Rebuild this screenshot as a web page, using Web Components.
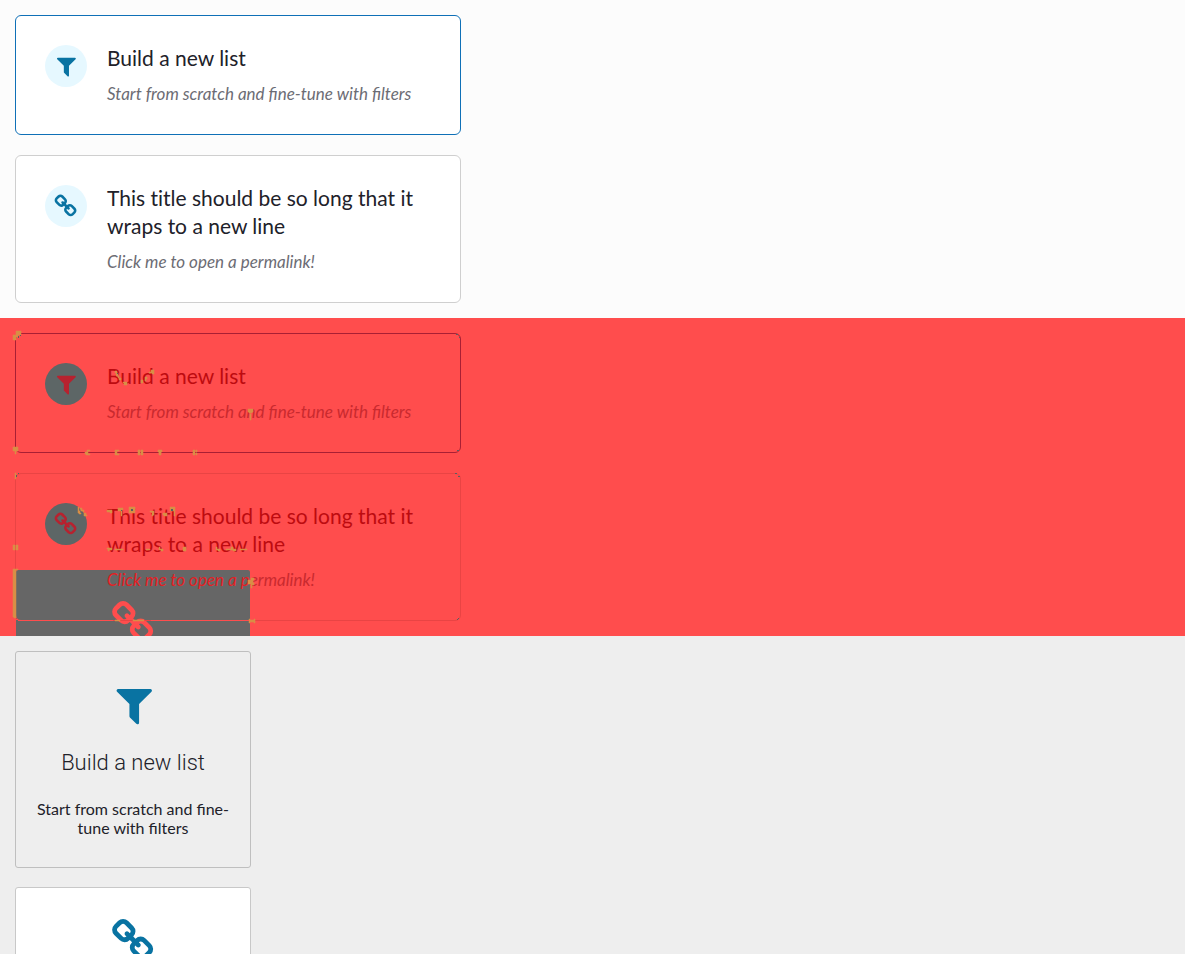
<!DOCTYPE html>
<html lang="en">
<head>
<meta charset="utf-8">
<title>Option cards</title>
<style>
body{margin:0;font-family:Lato,"Noto Sans",sans-serif;color:#212129}
</style>
</head>
<body>
<card-page></card-page>
<script>
const ICONS={
filter:['-30 -20 1792 1792','M1595 295q17 41-14 70l-493 493v742q0 42-39 59-13 5-25 5-27 0-45-19l-256-256q-19-19-19-45v-486l-493-493q-31-29-14-70 17-39 59-39h1280q42 0 59 39z'],
link:['-30 -20 1792 1792','M1456 1216q0-40-28-68l-208-208q-28-28-68-28-42 0-72 32 3 3 19 18.5t21.5 21.5 15 19 13 25.5 3.5 27.5q0 40-28 68t-68 28q-15 0-27.5-3.5t-25.5-13-19-15-21.5-21.5-18.5-19q-33 31-33 73 0 40 28 68l206 207q27 27 68 27 40 0 68-26l147-146q28-28 28-67zm-703-705q0-40-28-68l-206-207q-28-28-68-28-39 0-68 27l-147 146q-28 28-28 67 0 40 28 68l208 208q27 27 68 27 42 0 72-31-3-3-19-18.5t-21.5-21.5-15-19-13-25.5-3.5-27.5q0-40 28-68t68-28q15 0 27.5 3.5t25.5 13 19 15 21.5 21.5 18.5 19q33-31 33-73zm895 705q0 120-85 203l-147 146q-83 83-203 83-121 0-204-85l-206-207q-83-83-83-203 0-123 88-209l-88-88q-86 88-208 88-120 0-204-84l-208-208q-84-84-84-204t85-203l147-146q83-83 203-83 121 0 204 85l206 207q83 83 83 203 0 123-88 209l88 88q86-88 208-88 120 0 204 84l208 208q84 84 84 204z']
};
const define=(name,html)=>customElements.define(name,class extends HTMLElement{
  constructor(){super();this.attachShadow({mode:'open'}).innerHTML=html;}
});

customElements.define('app-icon',class extends HTMLElement{
  connectedCallback(){
    if(this.shadowRoot)return;
    const [box,path]=ICONS[this.getAttribute('name')];
    this.attachShadow({mode:'open'}).innerHTML=`<style>:host{display:block;width:24px;height:24px}svg{display:block;width:100%;height:100%;fill:currentColor}</style>
    <svg viewBox="${box}" aria-hidden="true"><path d="${path}"/></svg>`;
  }
});

customElements.define('option-card',class extends HTMLElement{
  connectedCallback(){
    if(this.shadowRoot)return;
    const icon=this.getAttribute('icon');
    const tag=icon==='link'?'a href="#permalink"':'button type="button"';
    this.attachShadow({mode:'open'}).innerHTML=`<style>
    :host{display:block;max-width:446px}
    .card{box-sizing:border-box;width:100%;display:flex;align-items:flex-start;gap:20px;padding:28px 29px;margin:0;text-align:left;text-decoration:none;font:inherit;color:inherit;cursor:pointer;background:var(--card-bg,#fff);border:1px solid var(--card-border,#cfcfcf);border-radius:6px}
    :host([selected]) .card{border-color:var(--card-active,#0f70b7)}
    .badge{flex:none;display:flex;align-items:center;justify-content:center;width:42px;height:42px;margin-top:1px;border-radius:50%;background:var(--badge-bg,#e6f8ff);color:var(--icon,#0973a2)}
    .text{display:flex;flex-direction:column;gap:10px;min-width:0}
    .title{font-size:21px;line-height:28px;font-variant-ligatures:none;color:var(--title,#212129)}
    .desc{font-size:17px;line-height:24px;font-style:italic;color:var(--desc,#6c6c74)}
    </style><${tag} class="card"><span class="badge"><app-icon name="${icon}"></app-icon></span><span class="text"><span class="title"><slot name="title"></slot></span><span class="desc"><slot></slot></span></span></${icon==='link'?'a':'button'}>`;
  }
});

customElements.define('tile-card',class extends HTMLElement{
  connectedCallback(){
    if(this.shadowRoot)return;
    const icon=this.getAttribute('icon');
    const tag=icon==='link'?'a href="#permalink" aria-label="Open a permalink"':'button type="button"';
    this.attachShadow({mode:'open'}).innerHTML=`<style>
    :host{display:block;max-width:236px}
    .card{box-sizing:border-box;width:100%;display:flex;flex-direction:column;align-items:center;gap:18px;padding:30px 20px;margin:0;text-align:center;text-decoration:none;font:inherit;color:#212129;cursor:pointer;background:#fff;border:1px solid #c8c8c8;border-radius:3px}
    :host([selected]) .card{background:#eee;border-color:#bfbfbf}
    app-icon{width:45px;height:45px;color:#0973a2}
    .title{font-family:Roboto,sans-serif;font-weight:300;font-size:22px;line-height:36px}
    .desc{font-size:16px;line-height:19px}
    </style><${tag} class="card"><app-icon name="${icon}"></app-icon><span class="title"><slot name="title"></slot></span><span class="desc"><slot></slot></span></${icon==='link'?'a':'button'}>`;
  }
});

define('card-panel',`<style>
:host{display:block;background:#fcfcfc;min-height:0}
.stack{display:flex;flex-direction:column;gap:20px;padding:15px}
:host([tone=plain]){background:#eee;overflow:hidden}
:host([tone=plain]) .stack{gap:19px}
:host([tone=diff]){position:relative;overflow:hidden;background:#ff4d4d;--card-bg:transparent;--card-border:#e94444;--card-active:#a91f34;--badge-bg:#5d6666;--icon:#b7222f;--title:#bd0b10;--desc:#c92a2f}
:host([tone=diff]) .stack{position:relative}
</style><slot name="under"></slot><div class="stack"><slot></slot></div><slot name="over"></slot>`);

/* The part of the changed tile that overlaps the old cards. */
define('ghost-tile',`<style>
:host{position:absolute;left:16px;bottom:0;width:234px;height:66px;overflow:hidden;background:#666;border-radius:2px 2px 0 0;color:#ff4d4d}
app-icon{width:45px;height:45px;margin:30px auto 0}
</style><app-icon name="link"></app-icon>`);

/* Anti-aliasing marks of the comparison. */
define('diff-marks',`<style>:host{position:absolute;inset:0;pointer-events:none}svg{display:block;width:100%;height:100%}</style>
<svg aria-hidden="true"><g fill="#d88f46" stroke="#d88f46" stroke-width=".5">
<path d="M16 13h5v4h-3v2h-2v3h-3v-5h3zM13 129h5v4h-2v3h-1v-3h-2zM115 53h2v2h1v3h-2v-3h-1zM118 58h1v2h2v2h-2v-2h-1zM123 64h4v3h-3v-2h-1zM151 52h3v4h-2v-1h-3v-1h2zM145 59h2v2h-1v2h-1zM141 62h2v3h-2zM248 91h5v3h-1v1h-3v-1h-1zM250 96h1v6h-1z"/>
<path d="M85 134h2v-2h3v1h-2v3h2v1h-4v-1h-1zM115 132h4v1h-2v3h2v1h-4zM138 132h2v5h-2zM141 132h2v5h-2zM158 132h4v2h-1v3h-2v-3h-1zM193 132h2v5h-2zM196 132h1v2h-1zM196 135h1v2h-1z"/>
<path d="M15 155h1v6h-1zM78 189h1v4h1v2h1v1h-2v-1h-1zM80 190h2v2h2v2h-1v-1h-2zM84 195h2v2h1v1h-3zM107 192h5v3h-2v-1h-3zM118 190h5v2h-1v6h-1v-5h-3zM129 189h6v6h-6zM150 193h4v4h-1v1h-1v-4h-2zM163 195h4v3h-3v-1h-1zM170 189h5v9h-1v-5h-4z"/>
<path d="M13 227h2v5h-2zM16 227h2v5h-2zM107 230h5v2h-3v1h-1v-2h-1zM115 231h8v1h-8zM146 231h4v1h-4zM159 229h1v2h3v2h-2v-1h-2zM183 229h3v4h-3zM216 229h1v2h3v2h-2v-1h-2zM226 231h5v1h-5zM231 229h2v2h3v2h-3v-1h-2zM240 231h7v1h-7z"/>
<path d="M13 251h5v1h-2v48h-2v-1h-1zM248 262h3v-2h3v2h-1v3h1v2h-2v3h-1v-4h-3zM249 301h1v1h4v-1h1v4h-1v-1h-4v1h-1zM115 302h5v1h-5zM133 302h11v1h-11z"/>
</g><g fill="#ff4d4d"><path d="M18 302h95v1h-95zM151 302h98v1h-98zM15 300h1v1h2v1h-2v-1h-1z"/></g>
<g fill="#586063"><path d="M18 18h1v2h-1zM20 17h1v1h-1zM117 55h1v1h-1zM131 191h2v2h-2zM121 192h1v1h-1zM171 191h2v2h-2zM16 157h1v2h-1zM18 155h1v1h-1zM455 155h2v1h-2zM458 158h2v1h-2zM455 302h2v-1h1v-1h1v1h-1v1h-3zM456 16h2v1h-2zM459 19h1v1h-1zM457 132h2v1h-2z"/></g></svg>`);

define('card-page',`<style>
:host{display:grid;grid-template-rows:auto auto minmax(0,1fr);height:100vh;overflow:hidden}
.strong{color:#e41f24}
</style>
<card-panel>
<option-card icon="filter" selected><span slot="title">Build a new list</span>Start from scratch and fine-tune with filters</option-card>
<option-card icon="link"><span slot="title">This title should be so long that it wraps to a new line</span>Click me to open a permalink!</option-card>
</card-panel>
<card-panel tone="diff">
<ghost-tile slot="under"></ghost-tile>
<option-card icon="filter" selected><span slot="title">Build a new list</span>Start from scratch and fine-tune with filters</option-card>
<option-card icon="link"><span slot="title">This title should be so long that it wraps to a new line</span><span class="strong">Click me to open a p</span>ermalink!</option-card>
<diff-marks slot="over"></diff-marks>
</card-panel>
<card-panel tone="plain">
<tile-card icon="filter" selected><span slot="title">Build a new list</span>Start from scratch and fine-tune with filters</tile-card>
<tile-card icon="link"></tile-card>
</card-panel>`);
</script>
</body>
</html>
